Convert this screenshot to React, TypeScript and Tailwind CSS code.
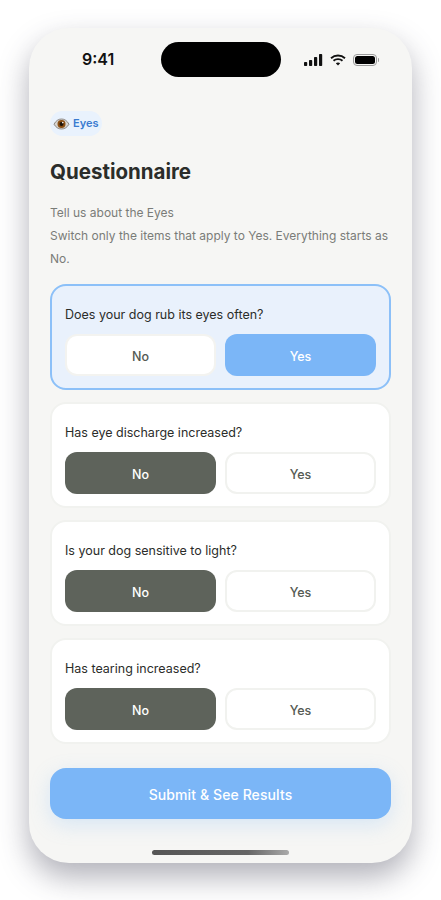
import React from 'react';

const questions = [
  { text: 'Does your dog rub its eyes often?', yes: true },
  { text: 'Has eye discharge increased?', yes: false },
  { text: 'Is your dog sensitive to light?', yes: false },
  { text: 'Has tearing increased?', yes: false },
];

const EyeIcon = () => (
  <svg width="17" height="14" viewBox="0 0 16 14">
    <path d="M0.5 7.2C2.5 3.6 5 2 8 2s5.500 1.600 7.500 5.200C13.500 10.600 11 12 8 12S2.500 10.600 0.500 7.200z" fill="#d9d6d2" stroke="#77716c" strokeWidth="0.8" />
    <circle cx="8" cy="7" r="4" fill="#8a4f14" />
    <circle cx="8" cy="7" r="2" fill="#1d1208" />
    <circle cx="9.300" cy="5.600" r="0.800" fill="#fff" />
  </svg>
);

const StatusIcons = () => (
  <div className="flex items-center">
    <svg width="19" height="12" viewBox="0 0 19 12">
      <rect x="0" y="8" width="3.200" height="4" rx="0.800" fill="#111" />
      <rect x="5" y="6" width="3.200" height="6" rx="0.800" fill="#111" />
      <rect x="10" y="3" width="3.200" height="9" rx="0.800" fill="#111" />
      <rect x="15" y="0" width="3.200" height="12" rx="0.800" fill="#111" />
    </svg>
    <svg className="ml-[7px]" width="16" height="12" viewBox="0 0 16 12" fill="none" stroke="#111" strokeWidth="1.900">
      <path d="M1 4.200C5 0.600 11 0.600 15 4.200" />
      <path d="M3.500 6.800C6 4.600 10 4.600 12.500 6.800" />
      <path d="M8 11.600L5.800 9.300C7 8.300 9 8.300 10.200 9.300z" fill="#111" stroke="none" />
    </svg>
    <div className="ml-[7px] flex items-center gap-[1px]">
      <div className="w-[24px] h-[12px] rounded-[4px] border border-[#9a9a9a] p-[1px]">
        <div className="w-full h-full rounded-[2.500px] bg-black" />
      </div>
      <div className="w-[1px] h-[4px] rounded-r-full bg-[#9a9a9a]" />
    </div>
  </div>
);

const QuestionCard = ({ text, yes }: { text: string; yes: boolean }) => (
  <div className={`h-[106px] rounded-[16px] border-2 px-[13px] pt-[18px] ${yes ? 'bg-[#e9f1fc] border-[#8cc0f8]' : 'bg-white border-[#f1f2ef]'}`}>
    <p className="h-[21px] text-[12.500px] leading-[21px] text-[#2b2d2a]">{text}</p>
    <div className="mt-[9px] grid grid-cols-2 gap-[9px]">
      <button className={`h-[42px] pt-[6px] rounded-[12px] text-[12.500px] font-medium ${yes ? 'bg-white border-2 border-[#f3f3f0] text-[#555a53]' : 'bg-[#5e635b] text-white'}`}>No</button>
      <button className={`h-[42px] pt-[6px] rounded-[12px] text-[12.500px] font-medium ${yes ? 'bg-[#7bb6f7] text-white' : 'bg-white border-2 border-[#f1f2ef] text-[#555a53]'}`}>Yes</button>
    </div>
  </div>
);

export default function App() {
  return (
    <div className="min-h-[900px] bg-white pt-[28px] font-['Inter',sans-serif]">
      <div className="mx-auto w-[383px] h-[835px] overflow-hidden rounded-[40px] bg-[#f6f6f4] shadow-[0_14px_30px_rgba(60,60,80,0.4)]">
        <div className="flex items-center pt-[14px] h-[49px]">
          <div className="w-[132px] pl-[53px] text-[16px] font-semibold leading-[35px] text-[#111]">9:41</div>
          <div className="w-[120px] h-[35px] rounded-full bg-black" />
          <div className="ml-[23px]"><StatusIcons /></div>
        </div>

        <div className="px-[21px] pt-[34px]">
          <div className="inline-flex h-[25px] items-center gap-[3px] rounded-full bg-[#e9f2fd] px-[3px] text-[11px] font-semibold text-[#3a7bd0]">
            <EyeIcon />
            <span className="pr-[1px]">Eyes</span>
          </div>
          <h1 className="mt-[18px] text-[20.500px] font-bold leading-[34px] text-[#2b2d2a]">Questionnaire</h1>
          <div className="mt-[12px] text-[12px] leading-[23px] text-[#7a7c78]">
            <p>Tell us about the Eyes</p>
            <p>Switch only the items that apply to Yes. Everything starts as No.</p>
          </div>
          <div className="mt-[14px] flex flex-col gap-[12px]">
            {questions.map((q) => (
              <QuestionCard key={q.text} text={q.text} yes={q.yes} />
            ))}
          </div>
          <button className="mt-[24px] h-[51px] w-full pt-[3px] rounded-[16px] bg-[#7bb6f7] text-[14px] font-medium tracking-[0.1px] text-white shadow-[0_6px_20px_rgba(123,182,247,0.25)]">
            Submit &amp; See Results
          </button>
        </div>

        <div className="mx-auto mt-[31px] h-[5px] w-[137px] rounded-full bg-gradient-to-r from-[#555] via-[#666] via-70% to-[#aaa]" />
      </div>
    </div>
  );
}
